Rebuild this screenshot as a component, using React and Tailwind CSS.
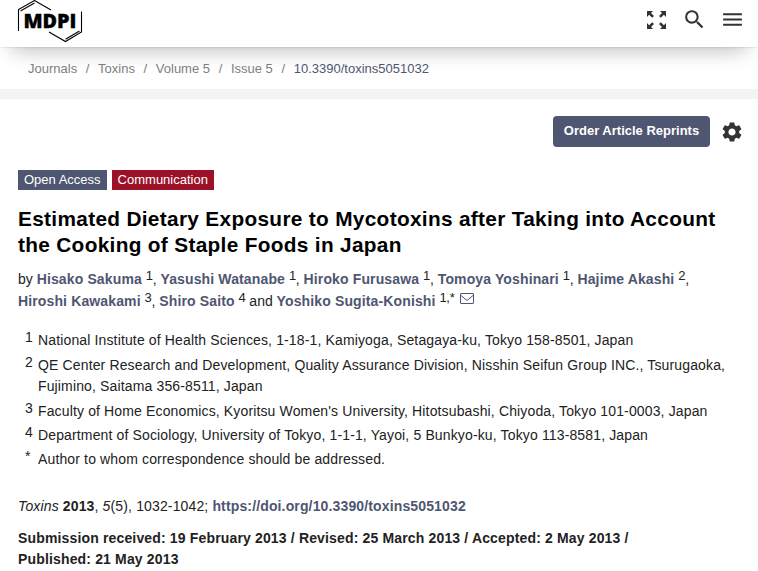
import { MdSearch, MdMenu, MdSettings } from 'react-icons/md';

const crumbs = ['Journals', 'Toxins', 'Volume 5', 'Issue 5'];

const authors = [
    { name: 'Hisako Sakuma', mark: '1', after: ', ' },
    { name: 'Yasushi Watanabe', mark: '1', after: ', ' },
    { name: 'Hiroko Furusawa', mark: '1', after: ', ' },
    { name: 'Tomoya Yoshinari', mark: '1', after: ', ' },
    { name: 'Hajime Akashi', mark: '2', after: ', ' },
    { name: 'Hiroshi Kawakami', mark: '3', after: ', ' },
    { name: 'Shiro Saito', mark: '4', after: ' and ' },
    { name: 'Yoshiko Sugita-Konishi', mark: '1,*', after: ' ' },
];

const affiliations = [
    { mark: '1', text: 'National Institute of Health Sciences, 1-18-1, Kamiyoga, Setagaya-ku, Tokyo 158-8501, Japan', box: 'h-[25px]' },
    { mark: '2', text: 'QE Center Research and Development, Quality Assurance Division, Nisshin Seifun Group INC., Tsurugaoka, Fujimino, Saitama 356-8511, Japan', box: 'h-[46px]' },
    { mark: '3', text: "Faculty of Home Economics, Kyoritsu Women's University, Hitotsubashi, Chiyoda, Tokyo 101-0003, Japan", box: 'h-6' },
    { mark: '4', text: 'Department of Sociology, University of Tokyo, 1-1-1, Yayoi, 5 Bunkyo-ku, Tokyo 113-8581, Japan', box: 'h-6' },
    { mark: '*', text: 'Author to whom correspondence should be addressed.', box: 'h-6' },
];

const Logo = () => (
    <svg width="66" height="43" viewBox="0 0 66 43" className="block">
        <g fill="none" stroke="#000" strokeWidth="1.1">
            <path d="M1.5 31V9.5L17.5 .5L34 10" />
            <path d="M3.5 11L17.5 3" />
            <path d="M64.5 11.5V32L48.5 41.5L32 32" />
            <path d="M62.5 31L48.5 39.2" />
        </g>
        <rect x="6" y="13" width="54" height="16" fill="#fff" />
        <text
            x="6.5"
            y="27.8"
            textLength="53"
            lengthAdjust="spacingAndGlyphs"
            fontFamily="Open Sans"
            fontWeight="800"
            fontSize="19.4"
            stroke="#000"
            strokeWidth=".35"
        >
            MDPI
        </text>
    </svg>
);

const Expand = () => (
    <svg width="19" height="18" viewBox="0 0 19 18" fill="currentColor" className="mt-1 mr-[3px]">
        <path d="M0 0H6L4 2L7 5L5.2 6.8L2.1 3.8L0 6Z" />
        <path d="M19 0H13L15 2L12 5L13.8 6.8L16.9 3.8L19 6Z" />
        <path d="M0 18H6L4 16L7 13L5.2 11.2L2.1 14.2L0 12Z" />
        <path d="M19 18H13L15 16L12 13L13.8 11.2L16.9 14.2L19 12Z" />
    </svg>
);

const Envelope = () => (
    <svg width="14" height="11" viewBox="0 0 14 11" fill="none" stroke="#4f5671" className="inline-block align-baseline relative -top-0.5 ml-0.5">
        <rect x=".5" y=".5" width="13" height="10" rx=".5" />
        <path d="M1 2.5L7 7.5L13 2.5" />
    </svg>
);

const App = () => {
    return (
        <div className="h-[571px] overflow-hidden bg-white text-[#222222] text-sm font-['Liberation_Sans',Arial,sans-serif]">
            <header className="relative z-10 flex justify-between h-[47px] pl-[17px] pr-[13px] bg-white shadow-[0_15px_20px_-12px_rgba(10,10,10,0.28),0_0_2px_rgba(10,10,10,0.2)]">
                <Logo />
                <div className="flex gap-[13px] pt-[7px] text-[#333333]">
                    <Expand />
                    <MdSearch size={25} />
                    <MdMenu size={25} />
                </div>
            </header>

            <nav className="flex h-[42px] pl-7 pt-3 text-[13px] leading-5 text-[#808080]">
                {crumbs.map((crumb) => (
                    <span key={crumb} className="whitespace-pre">
                        {crumb}
                        <span className="mx-[8.65px]">/</span>
                    </span>
                ))}
                <span className="text-[#4f5671]">10.3390/toxins5051032</span>
            </nav>
            <div className="h-[10px] bg-[#f4f4f4]" />

            <main className="pl-[18px] pr-[14px]">
                <div className="flex justify-end items-center gap-[10px] h-[31px] mt-[17px]">
                    <button className="h-[31px] w-[157px] rounded bg-[#4f5671] text-white font-bold text-[13px]">
                        Order Article Reprints
                    </button>
                    <MdSettings size={24} color="#333333" />
                </div>

                <div className="flex gap-[5px] mt-[23px] text-[13px] leading-5 text-white">
                    <span className="px-1.5 bg-[#4f5671]">Open Access</span>
                    <span className="px-1.5 bg-[#9b1127]">Communication</span>
                </div>

                <h1 className="mt-4 text-[20.8px] leading-[26px] tracking-[0.325px] font-bold text-black">
                    Estimated Dietary Exposure to Mycotoxins after Taking into Account the Cooking of Staple Foods in Japan
                </h1>

                <p className="mt-[10px] w-[690px] leading-[22px]">
                    by{' '}
                    {authors.map((a) => (
                        <span key={a.name}>
                            <span className="font-bold text-[#4f5671] tracking-[0.13px]">{a.name}</span>{' '}
                            <sup className="text-[13px] leading-none align-baseline relative -top-1 tracking-[-0.3px]">{a.mark}</sup>
                            {a.after}
                        </span>
                    ))}
                    <Envelope />
                </p>

                <div className="mt-[18px] pl-[7px] tracking-[0.14px] leading-[21px]">
                    {affiliations.map((aff) => (
                        <div key={aff.mark} className={`flex ${aff.box}`}>
                            <sup className="w-[13px] shrink-0 text-sm leading-[21px] -top-[3.5px]">{aff.mark}</sup>
                            <span>{aff.text}</span>
                        </div>
                    ))}
                </div>

                <p className="mt-[22px] leading-[22px] tracking-[0.14px]">
                    <i>Toxins</i> <b>2013</b>, <i>5</i>(5), 1032-1042;{' '}
                    <b className="text-[#4f5671]">https://doi.org/10.3390/toxins5051032</b>
                </p>
                <p className="mt-[11px] w-[640px] leading-[21px] tracking-[0.155px] font-bold">
                    Submission received: 19 February 2013 / Revised: 25 March 2013 / Accepted: 2 May 2013 / Published: 21 May 2013
                </p>
            </main>
        </div>
    );
};

export default App;
